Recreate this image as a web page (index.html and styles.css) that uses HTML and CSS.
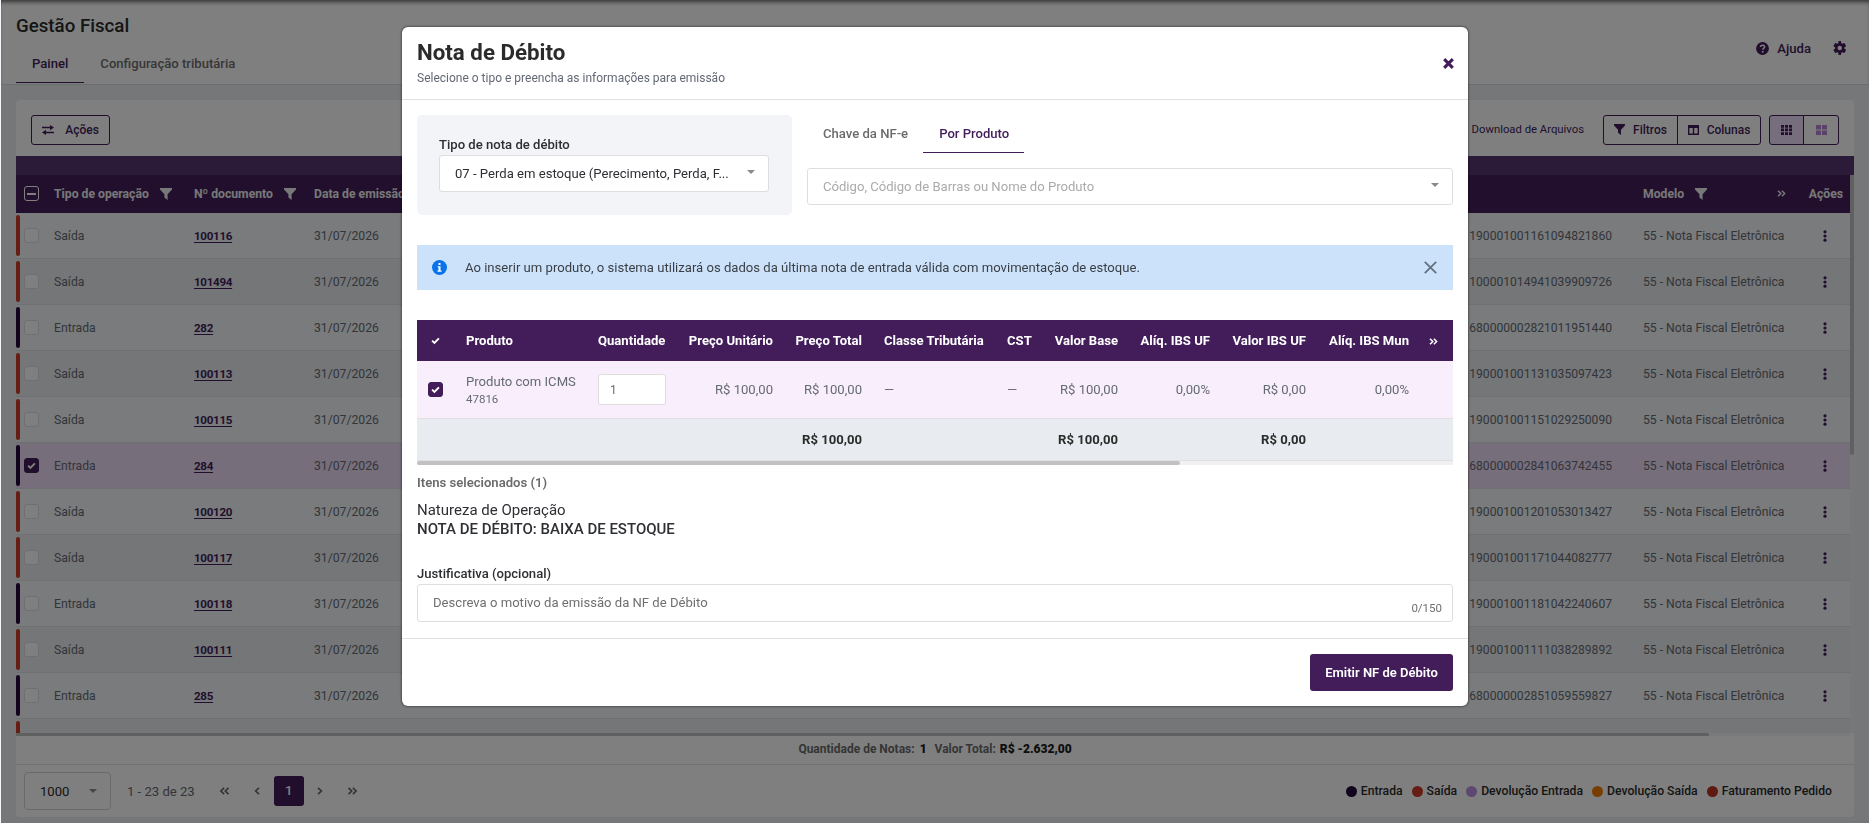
FILE: index.html
```
<!DOCTYPE html>
<html lang="pt-BR">
<head>
  <meta charset="UTF-8">
  <meta name="viewport" content="width=device-width, initial-scale=1.0">
  <title>Gestão Fiscal</title>
  <link rel="stylesheet" href="styles.css">
</head>
<body>
  <svg width="0" height="0" class="sprite">
    <symbol id="funnel" viewBox="0 0 12 12"><path d="M0 0h12v1.6L7.6 6.2V12L4.4 9.6V6.2L0 1.6z"/></symbol>
    <symbol id="check" viewBox="0 0 10 10"><path d="M1.2 5.2l2.6 2.6 5-5.2" fill="none" stroke="currentColor" stroke-width="2.1"/></symbol>
    <symbol id="dots" viewBox="0 0 4 12"><circle cx="2" cy="1.8" r="1.6"/><circle cx="2" cy="6" r="1.6"/><circle cx="2" cy="10.2" r="1.6"/></symbol>
    <symbol id="double" viewBox="0 0 10 8"><path d="M1 .8L4.2 4 1 7.2M5.4 .8L8.6 4 5.4 7.2" fill="none" stroke="currentColor" stroke-width="1.7"/></symbol>
    <symbol id="single" viewBox="0 0 6 8"><path d="M1 .8L4.4 4 1 7.2" fill="none" stroke="currentColor" stroke-width="1.7"/></symbol>
  </svg>

  <div class="page">
    <header class="topbar">
      <div>
        <h1>Gestão Fiscal</h1>
        <nav class="tabs">
          <a class="tab active">Painel</a>
          <a class="tab">Configuração tributária</a>
        </nav>
      </div>
      <div class="topbar-actions">
        <svg width="13" height="13" viewBox="0 0 13 13"><circle cx="6.5" cy="6.5" r="6.4"/><path d="M4.5 5.1c0-2.6 4.1-2.4 4.1-.1 0 1.5-1.9 1.4-1.9 2.7" fill="none" stroke="#fff" stroke-width="1.5"/><circle cx="6.7" cy="9.8" r=".95" fill="#fff"/></svg>
        <span>Ajuda</span>
        <svg class="gear" width="14" height="14" viewBox="0 0 24 24"><path d="M19.4 13c.04-.33.1-.66.1-1s-.06-.67-.1-1l2.8-2.1c.2-.2.3-.5.1-.7l-2.6-4.4c-.1-.3-.4-.3-.7-.2l-3 1.2c-.6-.4-1.1-.8-1.8-1L13.7.6c0-.3-.3-.6-.6-.6h-3c-.3 0-.6.2-.6.6L9 3.800c-.7.2-1.300.6-1.800 1l-3-1.200c-.3-.1-.6 0-.7.2L.9 8.200c-.1.2-.1.5.1.7L3.800 11c0 .3-.1.7-.1 1s.1.7.1 1L1 15.100c-.2.2-.3.5-.1.7l2.600 4.400c.1.3.4.3.7.2l3-1.200c.6.4 1.100.8 1.800 1l.5 3.200c0 .3.3.6.6.6h3c.3 0 .6-.2.6-.6l.5-3.200c.7-.2 1.300-.6 1.800-1l3 1.200c.3.1.6 0 .7-.2l2.600-4.400c.1-.2.1-.5-.1-.7zM11.600 15.800a3.800 3.800 0 1 1 0-7.600 3.800 3.800 0 0 1 0 7.600z" fill-rule="evenodd"/></svg>
      </div>
    </header>

    <main class="card">
      <div class="toolbar">
        <button class="btn acoes">
          <svg width="12" height="10" viewBox="0 0 12 10"><path d="M0 2.6h8.5M12 7.4H3.5" fill="none" stroke="currentColor" stroke-width="1.5"/><path d="M8 0l4 2.6-4 2.6zM4 4.8L0 7.4 4 10z"/></svg>
          Ações
        </button>
        <div class="toolbar-right">
          <span class="download"><svg width="10" height="10" viewBox="0 0 10 10"><path d="M0 .5h10v1.7H0zM0 4.1h10v1.7H0zM0 7.7h10v1.7H0z"/></svg>Download de Arquivos</span>
          <div class="group">
            <button class="btn filtros"><svg width="11" height="11"><use href="#funnel"/></svg>Filtros</button>
            <button class="btn colunas"><svg width="11" height="10" viewBox="0 0 11 10"><path d="M0 0h11v10H0zM1.4 3v5.6h3.4V3zM6.2 3v5.6h3.4V3z" fill-rule="evenodd"/></svg>Colunas</button>
          </div>
          <div class="group views">
            <button class="btn on"><svg width="11" height="10" viewBox="0 0 11 10"><path d="M0 0h3v2.7H0zM4 0h3v2.7H4zM8 0h3v2.7H8zM0 3.6h3v2.7H0zM4 3.6h3v2.7H4zM8 3.6h3v2.7H8zM0 7.2h3v2.7H0zM4 7.2h3v2.7H4zM8 7.2h3v2.7H8z"/></svg></button>
            <button class="btn off"><svg width="11" height="10" viewBox="0 0 11 10"><path d="M0 0h5v4.5H0zM6 0h5v4.5H6zM0 5.5h5V10H0zM6 5.5h5V10H6z"/></svg></button>
          </div>
        </div>
      </div>

      <div class="group-bar"></div>
      <div class="notes">
        <div class="notes-main">
          <div class="notes-scroll">
            <table class="notes-table">
              <colgroup><col class="c-check"><col class="c-tipo"><col class="c-doc"><col class="c-data"><col class="c-chave"><col class="c-modelo"><col class="c-acoes"></colgroup>
              <thead>
                <tr>
                  <th class="check-cell"><span class="checkbox minus"></span></th>
                  <th>Tipo de operação <svg class="th-funnel" width="12" height="12"><use href="#funnel"/></svg></th>
                  <th>Nº documento <svg class="th-funnel" width="12" height="12"><use href="#funnel"/></svg></th>
                  <th>Data de emissão</th>
                  <th></th>
                  <th><div class="modelo-head"><span>Modelo <svg class="th-funnel" width="12" height="12"><use href="#funnel"/></svg></span><svg width="9" height="7"><use href="#double"/></svg></div></th>
                  <th class="acoes-head">Ações</th>
                </tr>
              </thead>
              <tbody id="notes-body"></tbody>
            </table>
          </div>
          <div class="hscroll"><div></div></div>
        </div>
        <div class="vscroll"><div></div></div>
      </div>

      <div class="summary">Quantidade de Notas: <b>1</b><span>Valor Total: <b>R$ -2.632,00</b></span></div>

      <footer class="pager">
        <div class="page-size">1000<i class="caret"></i></div>
        <span class="range">1 - 23 de 23</span>
        <svg class="flip" width="11" height="8"><use href="#double"/></svg>
        <svg class="flip prev" width="6" height="8"><use href="#single"/></svg>
        <span class="current">1</span>
        <svg width="6" height="8"><use href="#single"/></svg>
        <svg class="last" width="11" height="8"><use href="#double"/></svg>
        <div class="legend">
          <span><i class="dot entrada"></i>Entrada</span>
          <span><i class="dot saida"></i>Saída</span>
          <span><i class="dot dev-entrada"></i>Devolução Entrada</span>
          <span><i class="dot dev-saida"></i>Devolução Saída</span>
          <span><i class="dot pedido"></i>Faturamento Pedido</span>
        </div>
      </footer>
    </main>
  </div>

  <div class="backdrop"></div>

  <div class="modal">
    <header class="modal-header">
      <div>
        <h2>Nota de Débito</h2>
        <p>Selecione o tipo e preencha as informações para emissão</p>
      </div>
      <svg width="11" height="11" viewBox="0 0 11 11"><path d="M1.2 1.2l8.6 8.6M9.800 1.2L1.2 9.8" stroke="#421d5a" stroke-width="3.1"/></svg>
    </header>

    <div class="modal-body">
      <div class="form-row">
        <div class="tipo-box">
          <label>Tipo de nota de débito</label>
          <div class="select">07 - Perda em estoque (Perecimento, Perda, F...<i class="caret"></i></div>
        </div>
        <div class="search">
          <nav class="modal-tabs">
            <a>Chave da NF-e</a>
            <a class="active">Por Produto</a>
          </nav>
          <div class="select placeholder">Código, Código de Barras ou Nome do Produto<i class="caret"></i></div>
        </div>
      </div>

      <div class="alert">
        <svg width="15" height="15" viewBox="0 0 15 15"><circle cx="7.5" cy="7.5" r="7.5" fill="#0a73ea"/><path d="M6.5 3h2v2h-2zM5.7 6.2h2.8v4.3h1v1.2H5.5v-1.2h1V7.4h-.8z" fill="#fff"/></svg>
        <span>Ao inserir um produto, o sistema utilizará os dados da última nota de entrada válida com movimentação de estoque.</span>
        <svg width="13" height="13" viewBox="0 0 13 13"><path d="M.8.8l11.4 11.4M12.2.8L.8 12.2" stroke="#64717f" stroke-width="1.8"/></svg>
      </div>

      <table class="products">
        <colgroup><col class="p1"><col class="p2"><col class="p3"><col class="p4"><col class="p5"><col class="p6"><col class="p7"><col class="p8"><col class="p9"><col class="p10"><col class="p11"><col></colgroup>
        <thead>
          <tr>
            <th><svg width="9" height="9"><use href="#check"/></svg></th>
            <th>Produto</th>
            <th>Quantidade</th>
            <th class="num">Preço Unitário</th>
            <th class="num">Preço Total</th>
            <th>Classe Tributária</th>
            <th>CST</th>
            <th class="num">Valor Base</th>
            <th class="num">Alíq. IBS UF</th>
            <th class="num">Valor IBS UF</th>
            <th class="num">Alíq. IBS Mun</th>
            <th class="more"><svg width="9" height="7"><use href="#double"/></svg></th>
          </tr>
        </thead>
        <tbody>
          <tr>
            <td><span class="checkbox checked"><svg width="9" height="9"><use href="#check"/></svg></span></td>
            <td>Produto com ICMS<small>47816</small></td>
            <td><div class="qty">1</div></td>
            <td class="num">R$ 100,00</td>
            <td class="num">R$ 100,00</td>
            <td>—</td>
            <td>—</td>
            <td class="num">R$ 100,00</td>
            <td class="num">0,00%</td>
            <td class="num">R$ 0,00</td>
            <td class="num">0,00%</td>
            <td></td>
          </tr>
        </tbody>
        <tfoot>
          <tr>
            <td></td><td></td><td></td><td></td>
            <td class="num">R$ 100,00</td>
            <td></td><td></td>
            <td class="num">R$ 100,00</td>
            <td></td>
            <td class="num">R$ 0,00</td>
            <td></td><td></td>
          </tr>
        </tfoot>
      </table>
      <div class="products-scroll"><div></div></div>

      <p class="selected">Itens selecionados (1)</p>
      <p class="natureza">Natureza de Operação<strong>NOTA DE DÉBITO: BAIXA DE ESTOQUE</strong></p>

      <label class="just-label">Justificativa (opcional)</label>
      <div class="textarea"><span>Descreva o motivo da emissão da NF de Débito</span><small>0/150</small></div>
    </div>

    <footer class="modal-footer">
      <button class="emit">Emitir NF de Débito</button>
    </footer>
  </div>

  <script src="script.js"></script>
</body>
</html>
```

FILE: styles.css
```
* {
  box-sizing: border-box;
}
body {
  margin: 0;
  height: 823px;
  overflow: hidden;
  background-color: #f3f6fa;
  font-family: Roboto, "Liberation Sans", sans-serif;
  font-size: 13.1px;
  color: #666b73;
}
svg {
  fill: currentColor;
  flex: none;
}
.sprite {
  position: absolute;
}
h1, h2, p {
  margin: 0;
}
button {
  font-family: inherit;
}
.page {
  height: 823px;
  margin-left: 1px;
  background-color: #ebeef2;
}
.topbar {
  display: flex;
  justify-content: space-between;
  height: 85px;
  padding: 0 22px 0 15px;
  background-color: #fff;
  border-bottom: 1px solid #d8dadd;
  box-shadow: inset 0 4px 4px -2px rgba(0, 0, 0, 0.6);
}
h1 {
  padding-top: 15px;
  font-size: 18.7px;
  line-height: 22px;
  font-weight: 500;
  color: #2b2b2b;
}
.tabs {
  display: flex;
  margin-top: 11px;
}
.tab {
  height: 35px;
  padding: 0 16px;
  line-height: 31px;
  font-weight: 500;
  color: #6f6f6f;
}
.tab.active {
  border-bottom: 1px solid #421d5a;
  color: #421d5a;
}
.topbar-actions {
  display: flex;
  align-items: center;
  height: 96px;
  color: #421d5a;
  font-weight: 500;
}
.topbar-actions span {
  margin: 0 22px 0 8px;
}
.card {
  height: 717px;
  margin: 15px 15px 0 15px;
  background-color: #fff;
  border-radius: 4px;
}
.toolbar {
  display: flex;
  justify-content: space-between;
  height: 56px;
  padding: 15px;
}
.btn {
  display: flex;
  align-items: center;
  justify-content: center;
  height: 30px;
  padding: 0 0 1px;
  border: 1px solid #421d5a;
  border-radius: 3px;
  background: none;
  color: #421d5a;
  font-size: 12px;
  font-weight: 500;
}
.acoes {
  width: 79px;
  gap: 11px;
}
.toolbar-right {
  display: flex;
  align-items: center;
  height: 30px;
}
.download {
  display: flex;
  align-items: center;
  gap: 4px;
  margin-right: 19px;
  padding-bottom: 2px;
  color: #421d5a;
  font-size: 11.3px;
}
.group {
  display: flex;
}
.group .btn:first-child {
  border-radius: 3px 0 0 3px;
}
.group .btn:last-child {
  margin-left: -1px;
  border-radius: 0 3px 3px 0;
}
.filtros {
  width: 75px;
  gap: 8px;
}
.colunas {
  width: 84px;
  gap: 8px;
}
.views {
  margin-left: 8px;
}
.views .btn {
  width: 35px;
}
.views .on {
  background-color: #eddcf8;
}
.views .off {
  width: 36px;
}
.views .off svg {
  fill: #b785d6;
}
.group-bar {
  height: 19px;
  background-color: #583670;
}
.notes {
  display: flex;
  height: 561px;
}
.notes-main {
  flex: 1;
}
.notes-scroll {
  height: 558px;
  overflow: hidden;
}
.notes-table {
  width: 100%;
  table-layout: fixed;
  border-spacing: 0;
  font-size: 12.2px;
}
.notes-table .c-check { width: 38px; }
.notes-table .c-tipo { width: 140px; }
.notes-table .c-doc { width: 120px; }
.notes-table .c-data { width: 120px; }
.notes-table .c-modelo { width: 150px; }
.notes-table .c-acoes { width: 57px; }
.notes-table th {
  height: 38px;
  padding: 0 0 1px;
  background-color: #421f5a;
  color: #f0f0f0;
  text-align: left;
  white-space: nowrap;
}
.th-funnel {
  margin-left: 8px;
  vertical-align: -2px;
}
.modelo-head {
  display: flex;
  justify-content: space-between;
  align-items: center;
  padding-right: 7px;
}
.notes-table .acoes-head {
  padding-right: 7px;
  text-align: right;
}
.notes-table td {
  height: 46px;
  padding: 0;
  border-bottom: 1px solid #dfe1e4;
  background-color: #f3f6f9;
  white-space: nowrap;
}
.notes-table tr:nth-child(even) td {
  background-color: #ebedf1;
}
.notes-table tr.selected-row td {
  background-color: #eedcf8;
}
.notes-table th.check-cell {
  padding-left: 8px;
}
.check-wrap {
  display: flex;
  align-items: center;
  gap: 4px;
  height: 41px;
}
.bar {
  width: 4px;
  height: 41px;
  border-radius: 2px;
}
.bar.saida { background-color: #cc3a26; }
.bar.entrada { background-color: #26083c; }
.checkbox {
  display: flex;
  align-items: center;
  justify-content: center;
  width: 15px;
  height: 15px;
  border: 1px solid #dcdee0;
  border-radius: 3px;
  background-color: #fff;
}
.checkbox.checked {
  border-color: #421d5a;
  background-color: #421d5a;
  color: #fff;
}
.checkbox.minus {
  border-color: #fff;
  background: none;
}
.minus::before {
  content: "";
  width: 9px;
  height: 2px;
  background-color: #fff;
}
.doc {
  font-size: 11.6px;
  font-weight: 700;
  letter-spacing: -0.3px;
  color: #421d5a;
  text-decoration: underline;
  text-underline-offset: 2px;
}
.notes-table .chave {
  padding-right: 31px;
  font-size: 12.1px;
  text-align: right;
}
.notes-table .kebab {
  padding-left: 30px;
  color: #421d5a;
}
.kebab svg {
  display: block;
}
.hscroll {
  height: 3px;
  background-color: #f4f4f4;
}
.hscroll div {
  width: 1693px;
  height: 3px;
  background-color: #c1c1c1;
  border-radius: 0 2px 2px 0;
}
.vscroll {
  width: 4px;
  height: 558px;
  background-color: #f1f1f1;
}
.vscroll div {
  height: 280px;
  background-color: #c1c1c1;
  border-radius: 0 0 2px 2px;
}
.summary {
  display: flex;
  justify-content: center;
  height: 29px;
  border-bottom: 1px solid #e3e5e8;
  line-height: 27px;
  font-size: 12px;
  font-weight: 700;
  color: #6b6b6b;
}
.summary b {
  margin-left: 5px;
  color: #1c1c1c;
}
.summary span {
  margin-left: 8px;
}
.summary span b {
  margin-left: 1px;
}
.pager {
  display: flex;
  align-items: center;
  height: 52px;
  padding: 0 22px 0 8px;
}
.page-size {
  display: flex;
  align-items: center;
  justify-content: space-between;
  width: 87px;
  height: 38px;
  padding: 0 13px 0 15px;
  border: 1px solid #d5d5d5;
  border-radius: 4px;
  color: #2b2b2b;
}
.caret {
  border: 4px solid transparent;
  border-top-color: #8a8a8a;
  border-bottom: 0;
}
.range {
  margin: 0 24px 0 16px;
}
.flip {
  transform: scaleX(-1);
}
.prev {
  margin: 0 14px 0 24px;
}
.current {
  width: 30px;
  height: 30px;
  margin-right: 13px;
  border-radius: 3px;
  background-color: #421d5a;
  color: #fff;
  font-weight: 500;
  line-height: 30px;
  text-align: center;
}
.last {
  margin-left: 24px;
}
.legend {
  display: flex;
  gap: 9px;
  margin-left: auto;
  font-size: 12.2px;
  font-weight: 500;
  color: #2b2b2b;
}
.legend span {
  display: flex;
  align-items: center;
  gap: 4px;
}
.dot {
  width: 11px;
  height: 11px;
  border-radius: 50%;
}
.dot.entrada { background-color: #26083c; }
.dot.saida { background-color: #cc3a26; }
.dot.dev-entrada { background-color: #bd8ee6; }
.dot.dev-saida { background-color: #ee7d00; }
.dot.pedido { background-color: #bd3323; }

.backdrop {
  position: fixed;
  inset: 0 0 0 1px;
  background-color: rgba(0, 0, 0, 0.5);
}
.modal {
  position: fixed;
  top: 27px;
  left: 402px;
  width: 1066px;
  height: 679px;
  border-radius: 6px;
  background-color: #fff;
  box-shadow: 0 0 2px 1px rgba(0, 0, 0, 0.35);
  color: #2d2f33;
}
.modal-header {
  display: flex;
  justify-content: space-between;
  align-items: center;
  height: 73px;
  padding: 0 14px 0 15px;
  border-bottom: 1px solid #dee0e2;
}
.modal-header h2 {
  font-size: 22.3px;
  line-height: 26px;
  font-weight: 700;
  color: #2b2b2b;
}
.modal-header p {
  margin-top: 4px;
  font-size: 12px;
  line-height: 18px;
  color: #636875;
}
.modal-body {
  height: 538px;
  padding: 15px 15px 0;
}
.form-row {
  display: flex;
  gap: 15px;
}
.tipo-box {
  width: 375px;
  height: 100px;
  padding: 20px 23px 0 22px;
  border-radius: 5px;
  background-color: #f3f4f8;
}
.tipo-box label,
.just-label {
  display: block;
  line-height: 20px;
  font-weight: 500;
}
.select {
  display: flex;
  align-items: center;
  justify-content: space-between;
  height: 37px;
  padding: 0 13px 1px 15px;
  border: 1px solid #dedede;
  border-radius: 3px;
  background-color: #fff;
}
.select .caret {
  margin-bottom: 2px;
}
.search {
  flex: 1;
}
.modal-tabs {
  display: flex;
  margin-bottom: 15px;
}
.modal-tabs a {
  height: 38px;
  padding: 0 15px 0 16px;
  line-height: 38px;
  font-weight: 500;
  color: #6b6b6b;
}
.modal-tabs .active {
  border-bottom: 1px solid #421d5a;
  color: #421d5a;
}
.placeholder {
  color: #aaa;
}
.alert {
  display: flex;
  align-items: center;
  height: 45px;
  margin-top: 30px;
  padding: 0 16px 0 15px;
  background-color: #cce2fb;
  color: #3a3f45;
}
.alert span {
  flex: 1;
  margin-left: 18px;
}
.products {
  width: 100%;
  margin-top: 30px;
  table-layout: fixed;
  border-spacing: 0;
}
.products .p1 { width: 38px; }
.products .p2 { width: 132px; }
.products .p3 { width: 90px; }
.products .p4 { width: 107px; }
.products .p5 { width: 89px; }
.products .p6 { width: 123px; }
.products .p7 { width: 47px; }
.products .p8 { width: 86px; }
.products .p9 { width: 92px; }
.products .p10 { width: 96px; }
.products .p11 { width: 103px; }
.products th,
.products td {
  padding: 0 11px;
  text-align: left;
  white-space: nowrap;
}
.products th {
  height: 41px;
  background-color: #421d5a;
  color: #fff;
  font-weight: 700;
}
.products th:first-child {
  padding-left: 14px;
}
.products .more {
  padding: 0 0 0 9px;
}
.products td {
  height: 58px;
  border-bottom: 1px solid #dee0e2;
  background-color: #f8eefc;
  color: #666b73;
}
.products .num {
  text-align: right;
}
.products small {
  display: block;
  margin-top: 3px;
  font-size: 11.5px;
}
.products tfoot td {
  height: 42px;
  padding-bottom: 1px;
  background-color: #e8ecf0;
  color: #2b2b2b;
  font-weight: 700;
}
.qty {
  width: 68px;
  height: 31px;
  padding-left: 11px;
  border: 1px solid #dedede;
  border-radius: 3px;
  background-color: #fff;
  font-size: 12px;
  line-height: 31px;
}
.products-scroll {
  height: 4px;
  background-color: #f1f1f1;
}
.products-scroll div {
  width: 763px;
  height: 4px;
  background-color: #c1c1c1;
  border-radius: 2px;
}
.selected {
  margin-top: 9px;
  line-height: 18px;
  font-weight: 600;
  color: #6b6b6b;
}
.natureza {
  margin-top: 9px;
  font-size: 15px;
  line-height: 19px;
}
.natureza strong {
  display: block;
  font-weight: 500;
}
.just-label {
  margin-top: 25px;
}
.textarea {
  display: flex;
  justify-content: space-between;
  height: 38px;
  padding: 10px 10px 0 15px;
  border: 1px solid #dedede;
  border-radius: 3px;
  color: #6f6f6f;
}
.textarea small {
  padding-top: 7px;
  font-size: 11.5px;
  line-height: 13px;
}
.modal-footer {
  display: flex;
  justify-content: flex-end;
  height: 68px;
  padding: 15px;
  border-top: 1px solid #dee0e2;
}
.emit {
  width: 143px;
  height: 37px;
  padding: 0;
  border: 0;
  border-radius: 3px;
  background-color: #421d5a;
  color: #fff;
  font-size: 13px;
  font-weight: 600;
}
```

FILE: script.js
```
const notes = [
  ['Saída', '100116', '190001001161094821860'],
  ['Saída', '101494', '100001014941039909726'],
  ['Entrada', '282', '680000002821011951440'],
  ['Saída', '100113', '190001001131035097423'],
  ['Saída', '100115', '190001001151029250090'],
  ['Entrada', '284', '680000002841063742455', true],
  ['Saída', '100120', '190001001201053013427'],
  ['Saída', '100117', '190001001171044082777'],
  ['Entrada', '100118', '190001001181042240607'],
  ['Saída', '100111', '190001001111038289892'],
  ['Entrada', '285', '680000002851059559827'],
  ['Saída', '', '']
];

const body = document.getElementById('notes-body');

notes.forEach(([tipo, doc, chave, selected]) => {
  const row = document.createElement('tr');
  if (selected) row.className = 'selected-row';
  const bar = tipo === 'Entrada' ? 'entrada' : 'saida';
  const check = selected ? '<svg width="9" height="9"><use href="#check"/></svg>' : '';
  row.innerHTML = `
    <td class="check-cell"><div class="check-wrap"><i class="bar ${bar}"></i><span class="checkbox ${selected ? 'checked' : ''}">${check}</span></div></td>
    <td>${doc ? tipo : ''}</td>
    <td><a class="doc">${doc}</a></td>
    <td>${doc ? '31/07/2026' : ''}</td>
    <td class="chave">${chave}</td>
    <td>${doc ? '55 - Nota Fiscal Eletrônica' : ''}</td>
    <td class="kebab">${doc ? '<svg width="4" height="12"><use href="#dots"/></svg>' : ''}</td>`;
  body.appendChild(row);
});
```
